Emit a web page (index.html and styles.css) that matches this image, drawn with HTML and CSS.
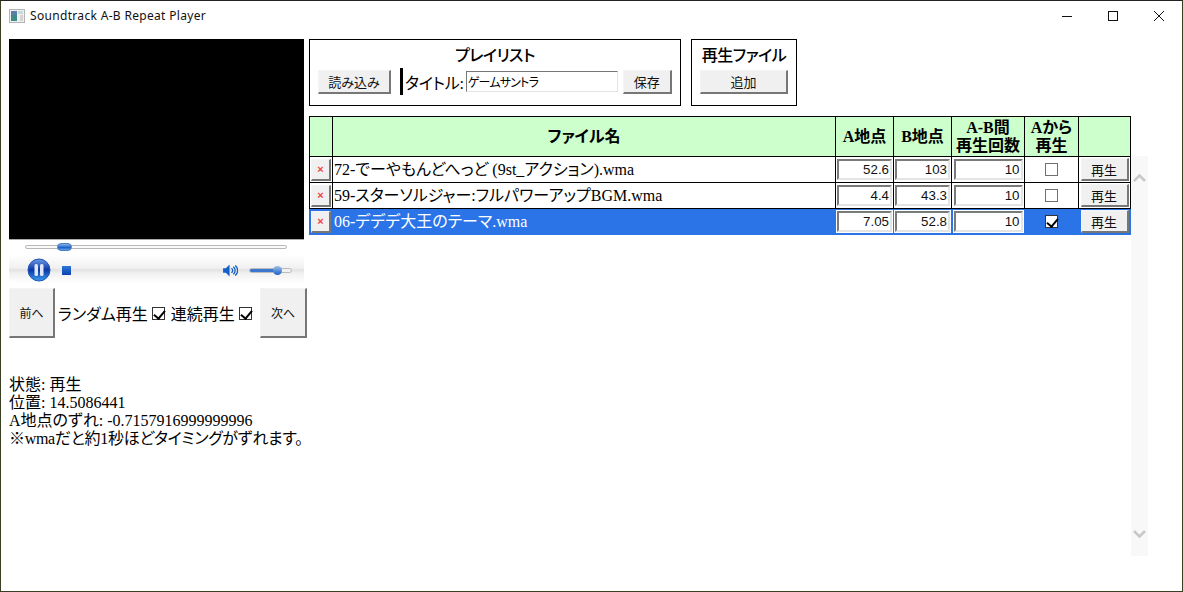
FILE: index.html
```html
<!DOCTYPE html>
<html lang="ja">
  <head>
    <meta charset="UTF-8" />
    <title>Soundtrack A-B Repeat Player</title>
    <link rel="stylesheet" href="styles.css">
  </head>

  <body>
    <div class="window">
      <div class="titlebar">
        <svg class="app-icon" width="16" height="16" viewBox="0 0 16 16">
          <rect x="0.5" y="1.5" width="15" height="13" fill="#f0f0f0" stroke="#b4b4b4" />
          <rect x="2" y="3" width="6" height="10" fill="#3d8a86" />
          <rect x="2" y="3" width="6" height="4" fill="#5c7fa8" />
          <rect x="9" y="3" width="5" height="3" fill="#c4dcdc" />
          <rect x="11" y="7" width="3" height="6" fill="#d4d4d4" />
        </svg>
        <span class="title-text">Soundtrack A-B Repeat Player</span>
        <div class="window-btns">
          <svg width="46" height="30" viewBox="0 0 46 30"><path d="M18 15.500h10" stroke="#111" fill="none" /></svg>
          <svg width="46" height="30" viewBox="0 0 46 30"><rect x="18.500" y="10.500" width="9" height="9" stroke="#111" fill="none" /></svg>
          <svg width="46" height="30" viewBox="0 0 46 30"><path d="M18 10l10 10M28 10l-10 10" stroke="#111" fill="none" /></svg>
        </div>
      </div>

      <div class="content">
        <div class="left">
          <div class="video"></div>
          <div class="seek-row">
            <div class="seek-track"><span class="seek-thumb"></span></div>
          </div>
          <div class="controls">
            <svg class="pause-btn" width="24" height="24" viewBox="0 0 24 24">
              <defs>
                <linearGradient id="pauseFill" x1="0" y1="0" x2="0" y2="1">
                  <stop offset="0" stop-color="#6f9be4" />
                  <stop offset="0.5" stop-color="#0b36a6" />
                  <stop offset="1" stop-color="#3c9cf0" />
                </linearGradient>
              </defs>
              <circle cx="12" cy="12" r="11" fill="url(#pauseFill)" stroke="#1f55b8" />
              <rect x="7.500" y="6" width="3.500" height="12" rx="1.500" fill="#dfe8f8" />
              <rect x="13" y="6" width="3.500" height="12" rx="1.500" fill="#dfe8f8" />
            </svg>
            <span class="stop-btn"></span>
            <svg class="vol-icon" width="15" height="13" viewBox="0 0 16 14">
              <path d="M0 4.500h3l4-4v13l-4-4H0z" fill="#1560c8" />
              <path d="M9 4.500a3 3 0 0 1 0 5M11 3a5 5 0 0 1 0 8M13 1.500a7 7 0 0 1 0 11" stroke="#1560c8" stroke-width="1.400" fill="none" />
            </svg>
            <div class="vol-track"><span class="vol-fill"></span><span class="vol-thumb"></span></div>
          </div>
          <div class="nav-row">
            <button type="button" class="nav-btn">前へ</button>
            <label class="nav-check">ランダム再生 <input type="checkbox" checked /></label>
            <label class="nav-check">連続再生 <input type="checkbox" checked /></label>
            <button type="button" class="nav-btn nav-next">次へ</button>
          </div>
          <div class="status">
            <div>状態: 再生</div>
            <div>位置: 14.5086441</div>
            <div>A地点のずれ: -0.7157916999999996</div>
            <div class="note">※wmaだと約1秒ほどタイミングがずれます。</div>
          </div>
        </div>

        <div class="right">
          <div class="panels">
            <div class="panel panel-list">
              <div class="panel-title">プレイリスト</div>
              <div class="panel-row">
                <button type="button" class="btn btn-load">読み込み</button>
                <span class="divider"></span>
                <span class="title-label">タイトル:</span>
                <input type="text" class="title-input" value="ゲームサントラ" />
                <button type="button" class="btn btn-save">保存</button>
              </div>
            </div>
            <div class="panel panel-file">
              <div class="panel-title">再生ファイル</div>
              <div class="panel-row">
                <button type="button" class="btn btn-add">追加</button>
              </div>
            </div>
          </div>

          <div class="list-area">
            <table class="tracks">
              <colgroup>
                <col class="c-del" /><col class="c-name" /><col class="c-a" /><col class="c-b" />
                <col class="c-count" /><col class="c-from" /><col class="c-play" />
              </colgroup>
              <thead>
                <tr>
                  <th></th>
                  <th>ファイル名</th>
                  <th>A地点</th>
                  <th>B地点</th>
                  <th>A-B間<br />再生回数</th>
                  <th>Aから<br />再生</th>
                  <th></th>
                </tr>
              </thead>
              <tbody>
                <tr>
                  <td><button type="button" class="del-btn">×</button></td>
                  <td class="name">72-でーやもんどへっど (9st_アクション).wma</td>
                  <td><input type="text" class="num" value="52.6" /></td>
                  <td><input type="text" class="num" value="103" /></td>
                  <td><input type="text" class="num num-wide" value="10" /></td>
                  <td class="center"><input type="checkbox" /></td>
                  <td><button type="button" class="play-btn">再生</button></td>
                </tr>
                <tr>
                  <td><button type="button" class="del-btn">×</button></td>
                  <td class="name">59-スターソルジャー:フルパワーアップBGM.wma</td>
                  <td><input type="text" class="num" value="4.4" /></td>
                  <td><input type="text" class="num" value="43.3" /></td>
                  <td><input type="text" class="num num-wide" value="10" /></td>
                  <td class="center"><input type="checkbox" /></td>
                  <td><button type="button" class="play-btn">再生</button></td>
                </tr>
                <tr class="active">
                  <td><button type="button" class="del-btn">×</button></td>
                  <td class="name">06-デデデ大王のテーマ.wma</td>
                  <td><input type="text" class="num" value="7.05" /></td>
                  <td><input type="text" class="num" value="52.8" /></td>
                  <td><input type="text" class="num num-wide" value="10" /></td>
                  <td class="center"><input type="checkbox" checked /></td>
                  <td><button type="button" class="play-btn">再生</button></td>
                </tr>
              </tbody>
            </table>
            <div class="scrollbar">
              <svg width="17" height="17" viewBox="0 0 17 17"><path d="M3 11l5.500-5.500L14 11" stroke="#c8c8c8" stroke-width="2.500" fill="none" /></svg>
              <svg width="17" height="17" viewBox="0 0 17 17"><path d="M3 6l5.500 5.500L14 6" stroke="#c8c8c8" stroke-width="2.500" fill="none" /></svg>
            </div>
          </div>
        </div>
      </div>
    </div>
  </body>
</html>
```

FILE: styles.css
```css
* {
  box-sizing: border-box;
}

html,
body {
  margin: 0;
  height: 100%;
  overflow: hidden;
}

body {
  background-color: white;
  color: #000;
  font-family: "Liberation Serif", "Noto Sans CJK JP", serif;
  font-size: 16px;
  font-feature-settings: "palt";
}

input,
button {
  font-feature-settings: "palt";
}

/* 古いスタイルのチェックボックス */
input[type="checkbox"] {
  appearance: none;
  position: relative;
  width: 13px;
  height: 13px;
  margin: 0;
  background-color: white;
  border: 1px solid #707070;
  border-radius: 0;
}

input[type="checkbox"]:checked {
  border-color: #333;
}

input[type="checkbox"]:checked::after {
  content: "";
  position: absolute;
  left: 3px;
  top: 0;
  width: 5px;
  height: 9px;
  border: solid black;
  border-width: 0 2px 2px 0;
  transform: rotate(40deg);
}

.window {
  height: 592px;
  border: 1px solid #3a3f24;
  border-top-color: #222;
}

.titlebar {
  display: flex;
  align-items: center;
  height: 29px;
  padding-left: 8px;
}

.app-icon {
  margin-right: 5px;
}

.title-text {
  font-family: "Noto Sans", sans-serif;
  font-size: 12px;
  letter-spacing: 0.32px;
  color: #111;
}

.window-btns {
  display: flex;
  margin-left: auto;
}

.content {
  display: flex;
  padding: 9px 0 0 8px;
}

/* 左側 */
.left {
  width: 295px;
  margin-right: 5px;
}

.video {
  height: 200px;
  background-color: black;
}

.seek-row {
  height: 16px;
  padding: 5px 17px 0 16px;
  background-color: white;
  border-top: 1px solid #aaa;
}

.seek-track {
  position: relative;
  height: 4px;
  background-color: #fafafa;
  border: 1px solid #b8b8b8;
  border-radius: 2px;
}

.seek-thumb {
  position: absolute;
  left: 31px;
  top: -3px;
  width: 15px;
  height: 8px;
  border-radius: 4px;
  background: linear-gradient(#8ab4ea, #1c62c8 60%, #6aa0e4);
  border: 1px solid #4a7fc4;
}

.controls {
  display: flex;
  align-items: center;
  height: 33px;
  padding: 0 13px 3px 18px;
  background: linear-gradient(#fff, #f0f0f0 13px, #e2e2e2 15px, #f0f0f0 18px, #fff 28px);
}

.stop-btn {
  width: 9px;
  height: 9px;
  margin-left: 11px;
  background: linear-gradient(#2a76d8, #0c44b0);
}

.vol-icon {
  margin-left: auto;
}

.vol-track {
  position: relative;
  width: 41px;
  height: 3px;
  margin-left: 12px;
  background-color: #f0f0f0;
  outline: 1px solid #bbb;
  border-radius: 2px;
}

.vol-fill {
  display: block;
  width: 27px;
  height: 3px;
  background-color: #3a78d0;
}

.vol-thumb {
  position: absolute;
  left: 23px;
  top: -3px;
  width: 9px;
  height: 9px;
  border-radius: 50%;
  background: linear-gradient(#a0bfe8, #1c62c8);
}

.nav-row {
  display: flex;
  align-items: center;
  width: 298px;
  height: 50px;
}

.nav-btn {
  width: 46px;
  height: 50px;
  padding: 0;
  flex-shrink: 0;
  font-family: "Noto Sans CJK JP", sans-serif;
  font-size: 12px;
  color: #111;
  background-color: #f0f0f0;
  border: 1px solid;
  border-color: #f4f4f4 #777 #777 #f4f4f4;
  border-width: 1px 2px 2px 1px;
}

.nav-next {
  width: 47px;
  margin-left: auto;
}

.nav-check {
  display: flex;
  align-items: center;
  gap: 4px;
  margin-left: 3px;
  font-size: 16px;
  white-space: nowrap;
}

.nav-check + .nav-check {
  margin-left: 6px;
}

.status {
  margin-top: 38px;
  line-height: 18px;
  font-size: 16px;
  white-space: nowrap;
}

.note {
  letter-spacing: -0.3px;
}

/* 右側 */
.right {
  flex: 1;
}

.panels {
  display: flex;
  gap: 10px;
}

.panel {
  height: 67px;
  border: 1px solid black;
  text-align: center;
}

.panel-list {
  width: 372px;
}

.panel-file {
  width: 106px;
}

.panel-title {
  margin-top: 6px;
  height: 22px;
  line-height: 20px;
  font-size: 16px;
  font-weight: 500;
  letter-spacing: -0.5px;
}

.panel-row {
  display: flex;
  align-items: center;
  height: 27px;
  padding-left: 8px;
}

.btn {
  height: 24px;
  padding: 0;
  font-family: "Noto Sans CJK JP", sans-serif;
  font-size: 13px;
  color: #111;
  background-color: #f0f0f0;
  border: 1px solid;
  border-color: #f4f4f4 #777 #777 #f4f4f4;
  border-width: 1px 2px 2px 1px;
}

.btn-load {
  width: 73px;
}

.btn-save {
  width: 49px;
  margin-left: 5px;
}

.btn-add {
  width: 88px;
}

.divider {
  width: 3px;
  height: 27px;
  margin-left: 9px;
  background-color: black;
}

.title-label {
  margin-left: 2px;
  font-size: 16px;
  letter-spacing: -0.2px;
}

.title-input {
  width: 152px;
  height: 21px;
  margin-left: 2px;
  padding: 0 1px;
  font-family: "Noto Sans CJK JP", sans-serif;
  font-size: 12px;
  letter-spacing: -0.8px;
  border: 1px solid;
  border-color: #777 #e4e4e4 #e4e4e4 #777;
  outline: none;
}

.list-area {
  display: flex;
  margin-top: 10px;
}

.tracks {
  width: 821px;
  table-layout: fixed;
  border-collapse: collapse;
  align-self: flex-start;
}

.c-del { width: 23px; }
.c-name { width: 503px; }
.c-a { width: 58px; }
.c-b { width: 58px; }
.c-count { width: 73px; }
.c-from { width: 54px; }
.c-play { width: 52px; }

.tracks th,
.tracks td {
  padding: 0;
  border: 1px solid black;
}

.tracks th {
  height: 40px;
  background-color: #ccffcc;
  font-size: 16px;
  font-weight: bold;
  line-height: 18px;
}

.tracks td {
  height: 26px;
  text-align: center;
}

.tracks .name {
  padding: 1px 0 0 1px;
  line-height: 22px;
  text-align: left;
  white-space: nowrap;
  overflow: hidden;
}

.center input {
  display: block;
  margin: 0 auto;
}

.del-btn {
  display: block;
  width: 20px;
  height: 22px;
  margin: 0 auto;
  padding: 0;
  color: #f04040;
  font-family: "Liberation Sans", sans-serif;
  font-size: 11px;
  font-weight: bold;
  background-color: #f0f0f0;
  border: 1px solid;
  border-color: #f4f4f4 #777 #777 #f4f4f4;
  border-width: 1px 2px 2px 1px;
}

.num {
  display: block;
  width: 55px;
  height: 21px;
  margin: 0 auto;
  padding: 0 1px;
  text-align: right;
  font-family: "Liberation Sans", sans-serif;
  font-size: 13.300px;
  color: #111;
  border: 2px solid;
  border-color: #7a7a7a #e4e4e4 #e4e4e4 #7a7a7a;
}

.num-wide {
  width: 69px;
}

.play-btn {
  display: block;
  width: 48px;
  height: 23px;
  margin: 0 auto;
  padding: 0;
  font-family: "Noto Sans CJK JP", sans-serif;
  font-size: 13px;
  color: #111;
  background-color: #f0f0f0;
  border: 1px solid;
  border-color: #f4f4f4 #777 #777 #f4f4f4;
  border-width: 1px 2px 2px 1px;
}

.active td {
  background-color: #2a74e8;
  border-color: #2a74e8;
  border-top-color: black;
  color: white;
}

.active td + td {
  border-left-color: white;
}

.active .num {
  box-shadow: 0 0 0 1px white;
}

.scrollbar {
  display: flex;
  flex-direction: column;
  justify-content: space-between;
  width: 17px;
  height: 400px;
  margin-top: 40px;
  padding: 14px 0;
  background-color: #f8f8f8;
}
```
